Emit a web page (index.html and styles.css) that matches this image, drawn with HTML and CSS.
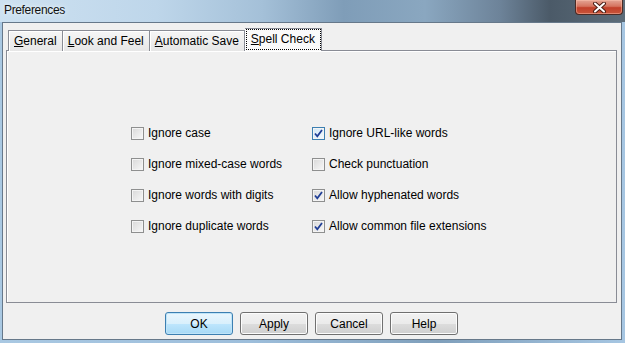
FILE: index.html
```html
<!DOCTYPE html>
<html>

<head>
    <title>Preferences</title>
    <link rel="stylesheet" href="styles.css">
</head>

<body>
    <div class="window">
        <div class="titlebar">
            <span class="title">Preferences</span>
            <div class="close">
                <svg width="15" height="11" viewBox="0 0 15 11">
                    <path d="M3 1.5 L12 9.5 M12 1.5 L3 9.5" stroke="#4a1e16" stroke-width="4" stroke-linecap="round" />
                    <path d="M3 1.5 L12 9.5 M12 1.5 L3 9.5" stroke="#fff" stroke-width="2" stroke-linecap="round" />
                </svg>
            </div>
        </div>
        <div class="client">
            <div class="tabs">
                <div class="tab"><u>G</u>eneral</div>
                <div class="tab"><u>L</u>ook and Feel</div>
                <div class="tab"><u>A</u>utomatic Save</div>
                <div class="tab active"><u>S</u>pell Check</div>
            </div>
            <div class="panel">
                <div class="options">
                    <label class="option"><span class="box"></span>Ignore case</label>
                    <label class="option"><span class="box checked hot"><svg width="11" height="11" viewBox="0 0 11 11"><path d="M2 5.5 L4.3 8.3 L9 2" fill="none" stroke="#213f96" stroke-width="1.8" /></svg></span>Ignore URL-like words</label>
                    <label class="option"><span class="box"></span>Ignore mixed-case words</label>
                    <label class="option"><span class="box"></span>Check punctuation</label>
                    <label class="option"><span class="box"></span>Ignore words with digits</label>
                    <label class="option"><span class="box checked"><svg width="11" height="11" viewBox="0 0 11 11"><path d="M2 5.5 L4.3 8.3 L9 2" fill="none" stroke="#213f96" stroke-width="1.8" /></svg></span>Allow hyphenated words</label>
                    <label class="option"><span class="box"></span>Ignore duplicate words</label>
                    <label class="option"><span class="box checked"><svg width="11" height="11" viewBox="0 0 11 11"><path d="M2 5.5 L4.3 8.3 L9 2" fill="none" stroke="#213f96" stroke-width="1.8" /></svg></span>Allow common file extensions</label>
                </div>
            </div>
            <div class="buttons">
                <button class="btn default">OK</button>
                <button class="btn">Apply</button>
                <button class="btn">Cancel</button>
                <button class="btn">Help</button>
            </div>
        </div>
    </div>
</body>

</html>
```

FILE: styles.css
```css
html,
body {
    margin: 0;
    padding: 0;
}

body {
    width: 625px;
    height: 343px;
    overflow: hidden;
    font-family: "Liberation Sans", Arial, sans-serif;
    font-size: 12px;
    color: #000;
    background: linear-gradient(90deg, #a9c8e2 0%, #9dbedb 40%, #7f9fbb 70%, #a6c6e2 100%);
}

.window {
    width: 625px;
    height: 343px;
    display: flex;
    flex-direction: column;
}

.titlebar {
    height: 23px;
    display: flex;
    justify-content: space-between;
    align-items: flex-start;
    background: linear-gradient(90deg, #cde1f1 0%, #bed6ea 25%, #a4c0d8 42%, #7f9db8 55%, #8aa7c0 68%, #6d8399 80%, #4b5a68 88%, #5c6c79 100%);
}

.title {
    padding: 3px 0 0 4px;
    line-height: 14px;
    letter-spacing: -0.35px;
    color: #111;
    text-shadow: 0 0 6px #e8f2fa, 0 0 3px #e8f2fa;
}

.close {
    width: 46px;
    height: 14px;
    margin-right: 2px;
    border: 1px solid #4b2a24;
    border-top: none;
    border-radius: 0 0 4px 4px;
    background: linear-gradient(#e4a595 0%, #d5745f 45%, #c2402a 55%, #c8553a 100%);
    box-shadow: inset 0 0 0 1px rgba(255, 200, 180, .45);
    display: flex;
    align-items: center;
    justify-content: center;
}

.client {
    flex: 1;
    margin: 0 3px 3px 2px;
    border: 1px solid #66788a;
    background: #f0f0f0;
    display: flex;
    flex-direction: column;
    padding: 5px 4px 4px 3px;
}

.tabs {
    height: 23px;
    display: flex;
    align-items: flex-start;
    padding-left: 2px;
    margin-bottom: -1px;
    position: relative;
    z-index: 1;
}

.tab {
    height: 19px;
    margin-top: 2px;
    padding: 1px 5px 0;
    line-height: 19px;
    border: 1px solid #898c95;
    border-bottom: none;
    border-left: none;
    background: linear-gradient(#f6f6f6, #e6e6e6);
    box-shadow: inset 1px 1px 0 #fff;
    white-space: nowrap;
}

.tab:first-child {
    border-left: 1px solid #898c95;
}

.tab.active {
    height: 22px;
    margin-top: 0;
    padding: 0 6px;
    line-height: 21px;
    background: #fafafa;
    border-left: none;
    outline: 1px dotted #000;
    outline-offset: -2px;
}

.panel {
    height: 253px;
    box-sizing: border-box;
    border: 1px solid #898c95;
    box-shadow: inset 1px 1px 0 #fff;
    background: #f0f0f0;
    display: flex;
    align-items: center;
    padding: 6px 0 0 124px;
}

.options {
    display: grid;
    grid-template-columns: 181px auto;
    row-gap: 15px;
}

.option {
    height: 16px;
    display: flex;
    align-items: center;
    gap: 4px;
    white-space: nowrap;
}

.box {
    width: 11px;
    height: 11px;
    border: 1px solid #8e8f8f;
    background: linear-gradient(135deg, #d8d8d8, #f8f8f8);
    box-shadow: inset 0 0 0 1px #f4f4f4;
    display: flex;
    align-items: center;
    justify-content: center;
}

.box.hot {
    border-color: #3c7fb1;
    background: linear-gradient(135deg, #cfe6f6, #f4fafe);
}

.buttons {
    margin-top: 9px;
    display: flex;
    justify-content: center;
    gap: 7px;
}

.btn {
    width: 68px;
    height: 23px;
    font-family: "Liberation Sans", Arial, sans-serif;
    font-size: 12px;
    color: #000;
    border: 1px solid #707070;
    border-radius: 3px;
    background: linear-gradient(#f2f2f2 0%, #ebebeb 50%, #dddddd 51%, #cfcfcf 100%);
    box-shadow: inset 0 0 0 1px #fcfcfc;
    padding: 0;
}

.btn.default {
    border-color: #3c7fb1;
    background: linear-gradient(#eaf6fd 0%, #d9f0fc 50%, #bee6fd 51%, #a7d9f5 100%);
    box-shadow: inset 0 0 0 1px #bfe4f8;
}
```
